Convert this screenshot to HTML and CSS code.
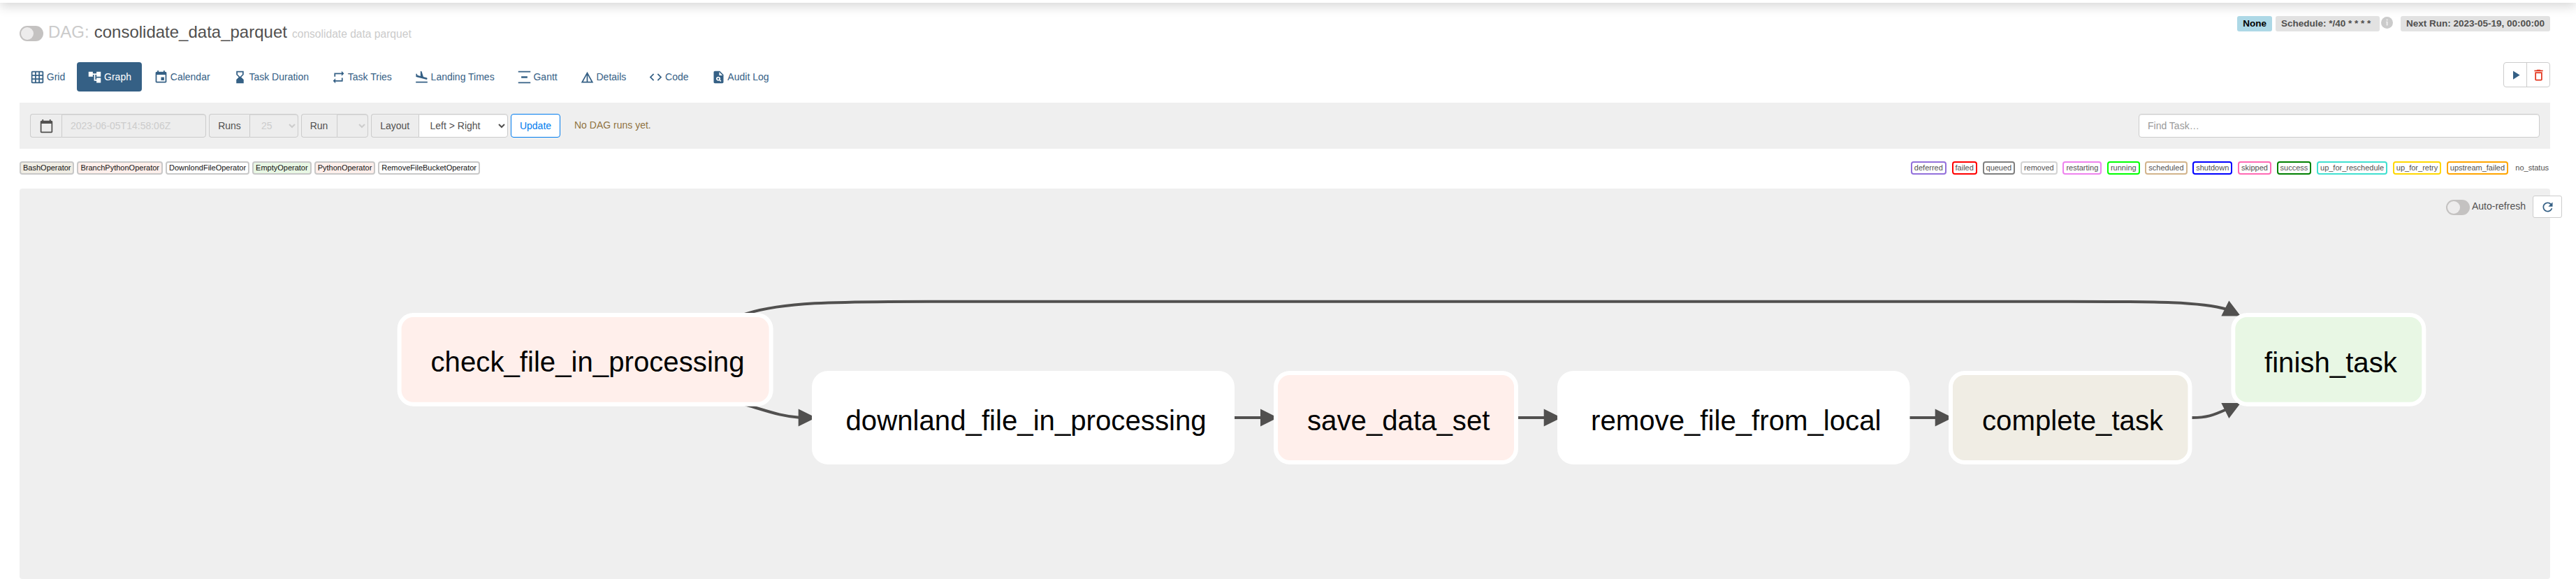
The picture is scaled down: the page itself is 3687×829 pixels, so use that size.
FILE: index.html
```html
<!DOCTYPE html>
<html lang="en">
<head>
<meta charset="utf-8">
<title>consolidate_data_parquet - Graph</title>
<link rel="stylesheet" href="styles.css">
</head>
<body>
<div class="navbar"></div>
<main class="page">
  <header class="dag-header">
    <h3 class="dag-title">
      <span class="switch"></span>
      <span class="muted">DAG:</span>
      <span class="dag-id">consolidate_data_parquet</span>
      <small class="muted">consolidate data parquet</small>
    </h3>
    <div class="labels">
      <span class="label none">None</span>
      <span class="label schedule">Schedule: */40 * * * *</span>
      <svg class="info" viewBox="0 0 20 20"><circle cx="10" cy="10" r="10" fill="#cbcbcb"/><path fill="#efefef" d="M9 4.2h2.2v2.3H9zM8.4 8h2.9v6.6H9V9.3h-.6z"/></svg>
      <span class="label next">Next Run: 2023-05-19, 00:00:00</span>
    </div>
  </header>

  <div class="toolbar">
    <nav class="tabs">
      <a class="tab"><svg class="icon" viewBox="0 0 24 24"><path d="M20 2H4c-1.100 0-2 .9-2 2v16c0 1.100.9 2 2 2h16c1.100 0 2-.9 2-2V4c0-1.100-.9-2-2-2zM8 20H4v-4h4v4zm0-6H4v-4h4v4zm0-6H4V4h4v4zm6 12h-4v-4h4v4zm0-6h-4v-4h4v4zm0-6h-4V4h4v4zm6 12h-4v-4h4v4zm0-6h-4v-4h4v4zm0-6h-4V4h4v4z"/></svg>Grid</a>
      <a class="tab active"><svg class="icon" viewBox="0 0 24 24"><path d="M22 11V3h-7v3H9V3H2v8h7V8h2v10h4v3h7v-8h-7v3h-2V8h2v3z"/></svg>Graph</a>
      <a class="tab"><svg class="icon" viewBox="0 0 24 24"><path d="M17 12h-5v5h5v-5zM16 1v2H8V1H6v2H5c-1.110 0-1.990.9-1.990 2L3 19c0 1.100.89 2 2 2h14c1.100 0 2-.9 2-2V5c0-1.100-.9-2-2-2h-1V1h-2zm3 18H5V8h14v11z"/></svg>Calendar</a>
      <a class="tab"><svg class="icon" viewBox="0 0 24 24"><path d="M18 22l-.01-6L14 12l3.990-4.010L18 2H6v6l4 4-4 3.990V22h12zM8 7.500V4h8v3.500l-4 4-4-4z"/></svg>Task Duration</a>
      <a class="tab"><svg class="icon" viewBox="0 0 24 24"><path d="M7 7h10v3l4-4-4-4v3H5v6h2V7zm10 10H7v-3l-4 4 4 4v-3h12v-6h-2v4z"/></svg>Task Tries</a>
      <a class="tab"><svg class="icon" viewBox="0 0 24 24"><path d="M2.500 19h19v2h-19v-2zm16.840-3.150c.8.210 1.620-.26 1.840-1.060.21-.8-.26-1.620-1.060-1.840l-5.310-1.420-2.760-9.020L10.120 2v8.280L5.150 8.950l-.93-2.320-1.450-.39v5.170l16.570 4.440z"/></svg>Landing Times</a>
      <a class="tab"><svg class="icon" viewBox="0 0 24 24"><path d="M2 2h20v2H2zM2 20h20v2H2zM7 10.500h10v3H7z"/></svg>Gantt</a>
      <a class="tab"><svg class="icon" viewBox="0 0 24 24"><path d="M12 3L2 21h20L12 3zm1 5.920L18.600 19H13V8.920zm-2 0V19H5.400L11 8.920z"/></svg>Details</a>
      <a class="tab"><svg class="icon" viewBox="0 0 24 24"><path d="M9.400 16.600L4.800 12l4.600-4.600L8 6l-6 6 6 6 1.400-1.400zm5.200 0l4.600-4.600-4.600-4.600L16 6l6 6-6 6-1.400-1.400z"/></svg>Code</a>
      <a class="tab"><svg class="icon" viewBox="0 0 24 24"><path fill-rule="evenodd" d="M14 2H6c-1.100 0-2 .9-2 2v16c0 1.100.9 2 2 2h12c1.100 0 2-.9 2-2V8l-6-6zm1.040 17.450l-1.880-1.880c-1.330.71-3.010.53-4.130-.59-1.370-1.370-1.370-3.580 0-4.950 1.370-1.370 3.580-1.370 4.950 0 1.120 1.120 1.310 2.800.59 4.130l1.880 1.880-1.410 1.410zM13 9V3.500L18.500 9H13z"/><circle cx="11.500" cy="14.500" r="1.500"/></svg>Audit Log</a>
    </nav>
    <div class="actions">
      <a class="action"><svg class="icon" viewBox="0 0 24 24"><path d="M8 5v14l11-7z"/></svg></a>
      <a class="action danger"><svg class="icon" viewBox="0 0 24 24"><path d="M6 19c0 1.100.9 2 2 2h8c1.100 0 2-.9 2-2V7H6v12zM8 9h8v10H8V9zm7.500-5l-1-1h-5l-1 1H5v2h14V4z"/></svg></a>
    </div>
  </div>

  <form class="filters">
    <div class="group date"><span class="addon"><svg class="icon" viewBox="0 0 24 24"><path d="M20 3h-1V1h-2v2H7V1H5v2H4c-1.100 0-2 .9-2 2v16c0 1.100.9 2 2 2h16c1.100 0 2-.9 2-2V5c0-1.100-.9-2-2-2zm0 18H4V8h16v13z"/></svg></span><input class="control" disabled value="2023-06-05T14:58:06Z"></div>
    <div class="group runs"><span class="addon">Runs</span><select class="control" disabled><option>25</option></select></div>
    <div class="group run"><span class="addon">Run</span><select class="control" disabled><option></option></select></div>
    <div class="group layout"><span class="addon">Layout</span><select class="control"><option>Left &gt; Right</option></select></div>
    <button type="button" class="update">Update</button>
    <span class="notice">No DAG runs yet.</span>
    <input class="control search" placeholder="Find Task…">
  </form>

  <div class="legend">
    <div class="operators">
      <span class="chip op bash">BashOperator</span>
      <span class="chip op python">BranchPythonOperator</span>
      <span class="chip op">DownlondFileOperator</span>
      <span class="chip op empty">EmptyOperator</span>
      <span class="chip op python">PythonOperator</span>
      <span class="chip op">RemoveFileBucketOperator</span>
    </div>
    <div class="states">
      <span class="chip deferred">deferred</span>
      <span class="chip failed">failed</span>
      <span class="chip queued">queued</span>
      <span class="chip removed">removed</span>
      <span class="chip restarting">restarting</span>
      <span class="chip running">running</span>
      <span class="chip scheduled">scheduled</span>
      <span class="chip shutdown">shutdown</span>
      <span class="chip skipped">skipped</span>
      <span class="chip success">success</span>
      <span class="chip reschedule">up_for_reschedule</span>
      <span class="chip retry">up_for_retry</span>
      <span class="chip upstream">upstream_failed</span>
      <span class="chip no-status">no_status</span>
    </div>
  </div>

  <section class="graph">
    <svg class="canvas" viewBox="28 270 3622 559">
      <g class="edges">
        <path d="M1040 458L1069 449C1120 433 1190 431.700 1330 431.700H2960C3090 431.700 3150 432 3188 443"/>
        <path d="M1040 570L1069 580C1100 589 1118 596 1146 598"/>
        <path d="M1760 598H1808M2168 598H2213M2728 598H2773"/>
        <path d="M3130 598H3138C3158 598 3167 595 3187 586"/>
      </g>
      <g class="arrows">
        <path d="M1142.700 585.500L1168 598L1142.700 610.500zM1804 585.500L1829 598L1804 610.500zM2209.700 585.500L2235 598L2209.700 610.500zM2769.700 585.500L2795 598L2769.700 610.500z"/>
        <path d="M3190.300 430.500L3207 452.500L3179.300 452.500zM3190.300 599L3207 577L3179.300 577z"/>
      </g>
      <g class="nodes">
        <rect class="n-python" x="571.600" y="451" width="532" height="127.700" rx="20"/>
        <rect class="n-plain" x="1165" y="534" width="599" height="128" rx="20"/>
        <rect class="n-python" x="1826" y="534" width="344" height="128" rx="20"/>
        <rect class="n-plain" x="2232" y="534" width="498.500" height="128" rx="20"/>
        <rect class="n-bash" x="2792" y="534" width="342.500" height="128" rx="20"/>
        <rect class="n-empty" x="3196.300" y="451" width="273" height="127.700" rx="20"/>
      </g>
      <g class="names">
        <text x="616.500" y="532">check_file_in_processing</text>
        <text x="1210.500" y="616">downland_file_in_processing</text>
        <text x="1871" y="616">save_data_set</text>
        <text x="2277" y="616">remove_file_from_local</text>
        <text x="2837" y="616">complete_task</text>
        <text x="3241" y="532.500">finish_task</text>
      </g>
    </svg>
    <div class="refresh">
      <span class="switch"></span>
      <span class="refresh-text">Auto-refresh</span>
      <a class="refresh-btn"><svg class="icon" viewBox="0 0 24 24"><path d="M17.650 6.350C16.200 4.900 14.210 4 12 4c-4.420 0-7.990 3.580-7.990 8s3.570 8 7.990 8c3.730 0 6.840-2.550 7.730-6h-2.080c-.82 2.330-3.040 4-5.650 4-3.310 0-6-2.690-6-6s2.690-6 6-6c1.660 0 3.140.69 4.220 1.780L13 11h7V4l-2.350 2.350z"/></svg></a>
    </div>
  </section>
</main>
</body>
</html>
```
FILE: styles.css
```css
* { box-sizing: border-box; }

body {
  display: flow-root;
  margin: 0;
  height: 829px;
  overflow: hidden;
  background: #fff;
  color: #51504f;
  font: 14px/20px "Liberation Sans", Arial, sans-serif;
}

.navbar {
  height: 50px;
  margin-top: -46px;
  background: #fff;
  box-shadow: 0 5px 15px rgba(0, 0, 0, .16);
}

.page { padding: 0 37px 0 28px; }

.icon { width: 21px; height: 21px; fill: currentColor; flex: none; }
.muted { color: #cbcbcb; }

.switch {
  flex: none;
  width: 34px;
  height: 22px;
  padding: 2px;
  border-radius: 11px;
  background: #c4c2c1;
}
.switch::before {
  content: "";
  display: block;
  width: 18px;
  height: 18px;
  border-radius: 50%;
  background: #edecec;
}

.dag-header { display: flex; justify-content: space-between; height: 85px; }
.dag-title {
  display: flex;
  align-items: baseline;
  gap: 7px;
  margin: 29px 0 0;
  font-size: 24px;
  font-weight: 400;
  line-height: 26px;
}
.dag-title .switch { align-self: flex-start; margin-top: 4px; }
.dag-title small { font-size: 15.6px; }

.labels { display: flex; align-items: flex-start; margin-top: 19px; }
.label {
  height: 22px;
  padding: 0 8px;
  border-radius: 3px;
  background: #e2e2e2;
  font-size: 13.5px;
  font-weight: 700;
  line-height: 21px;
  white-space: pre;
}
.label.none { background: #add8e6; color: #000; margin-right: 5px; }
.label.schedule { width: 149px; }
.info { width: 17px; height: 17px; margin: 1px 11px 0 2px; }

.toolbar { display: flex; justify-content: space-between; height: 58px; }
.tabs { display: flex; gap: 2px; height: 42px; }
.tab {
  display: flex;
  align-items: center;
  gap: 2.8px;
  padding: 0 15px;
  border-radius: 4px;
  color: #356085;
  white-space: nowrap;
}
.tab.active { background: #356085; color: #fff; }

.actions { display: flex; height: 36px; border: 1px solid #ccc; border-radius: 4px; }
.action {
  display: flex;
  align-items: center;
  justify-content: center;
  width: 32px;
  color: #356085;
}
.action + .action { width: 33px; border-left: 1px solid #ccc; }
.action.danger { color: #e43921; }

.filters {
  display: flex;
  align-items: center;
  height: 66px;
  padding: 0 15px;
  background: #efefef;
}
.group { display: flex; height: 34px; margin-right: 4px; }
.addon {
  display: flex;
  align-items: center;
  justify-content: center;
  border: 1px solid #ccc;
  border-right: 0;
  border-radius: 4px 0 0 4px;
  background: #ededed;
}
.control {
  flex: 1;
  min-width: 0;
  height: 34px;
  margin: 0;
  padding: 6px 12px;
  border: 1px solid #ccc;
  border-radius: 0 4px 4px 0;
  background-color: #fff;
  box-shadow: inset 0 1px 1px rgba(0, 0, 0, .075);
  color: #51504f;
  font: 14px/20px "Liberation Sans", Arial, sans-serif;
}
.control:disabled { background-color: #ededed; color: #ccc; opacity: 1; }
.control::placeholder { color: #999; }
.date { width: 252px; }
.date .addon { width: 45px; }
.runs { width: 127.500px; }
.runs .addon { width: 58px; }
.run { width: 96.500px; }
.run .addon { width: 51px; }
.layout { width: 196px; }
.layout .addon { width: 67.500px; }
.update {
  width: 71px;
  height: 34px;
  padding: 0;
  border: 1px solid #017cee;
  border-radius: 4px;
  background: #fff;
  color: #017cee;
  font: 14px/20px "Liberation Sans", Arial, sans-serif;
}
.notice { margin: -3px 0 0 20px; color: #8f7240; }
.search { flex: none; width: 574px; margin-left: auto; border-radius: 4px; }

.legend { display: flex; justify-content: space-between; padding: 18px 0 20px; }
.operators, .states { display: flex; }
.operators { gap: 4px; }
.states { gap: 7.700px; }
.chip {
  height: 19px;
  padding: 0 3px;
  border: 2px solid #ccc;
  border-radius: 4px;
  font-size: 11px;
  line-height: 15px;
  white-space: nowrap;
}
.op { color: #111; border-color: #c8c8c8; }
.bash { background: #f0ede4; }
.python { background: #ffefeb; }
.empty { background: #e8f7e4; }
.deferred { border-color: mediumpurple; }
.failed { border-color: red; }
.queued { border-color: gray; }
.removed { border-color: lightgrey; }
.restarting { border-color: violet; }
.running { border-color: lime; }
.scheduled { border-color: tan; }
.shutdown { border-color: blue; }
.skipped { border-color: hotpink; }
.success { border-color: green; }
.reschedule { border-color: turquoise; }
.retry { border-color: gold; }
.upstream { border-color: orange; }
.no-status { margin-left: -2.5px; border-color: transparent; padding-right: 0; }

.graph { position: relative; height: 559px; border-radius: 4px; background: #efefef; }
.canvas { display: block; width: 3622px; height: 559px; }
.edges { fill: none; stroke: #51504f; stroke-width: 4; }
.arrows { fill: #51504f; }
.nodes { stroke: #fff; stroke-width: 6; }
.n-python { fill: #ffefeb; }
.n-plain { fill: #fff; }
.n-bash { fill: #f0ede4; }
.n-empty { fill: #e8f7e4; }
.names { font-size: 40.200px; fill: #000; }

.refresh {
  position: absolute;
  top: 10px;
  right: -17px;
  display: flex;
  align-items: flex-start;
}
.refresh .switch { margin: 6px 3px 0 0; }
.refresh-text { margin: 5px 10px 0 0; }
.refresh-btn {
  display: flex;
  align-items: center;
  justify-content: center;
  width: 42px;
  height: 32px;
  border: 1px solid #ccc;
  border-radius: 3px;
  background: #fff;
  color: #356085;
}
```
